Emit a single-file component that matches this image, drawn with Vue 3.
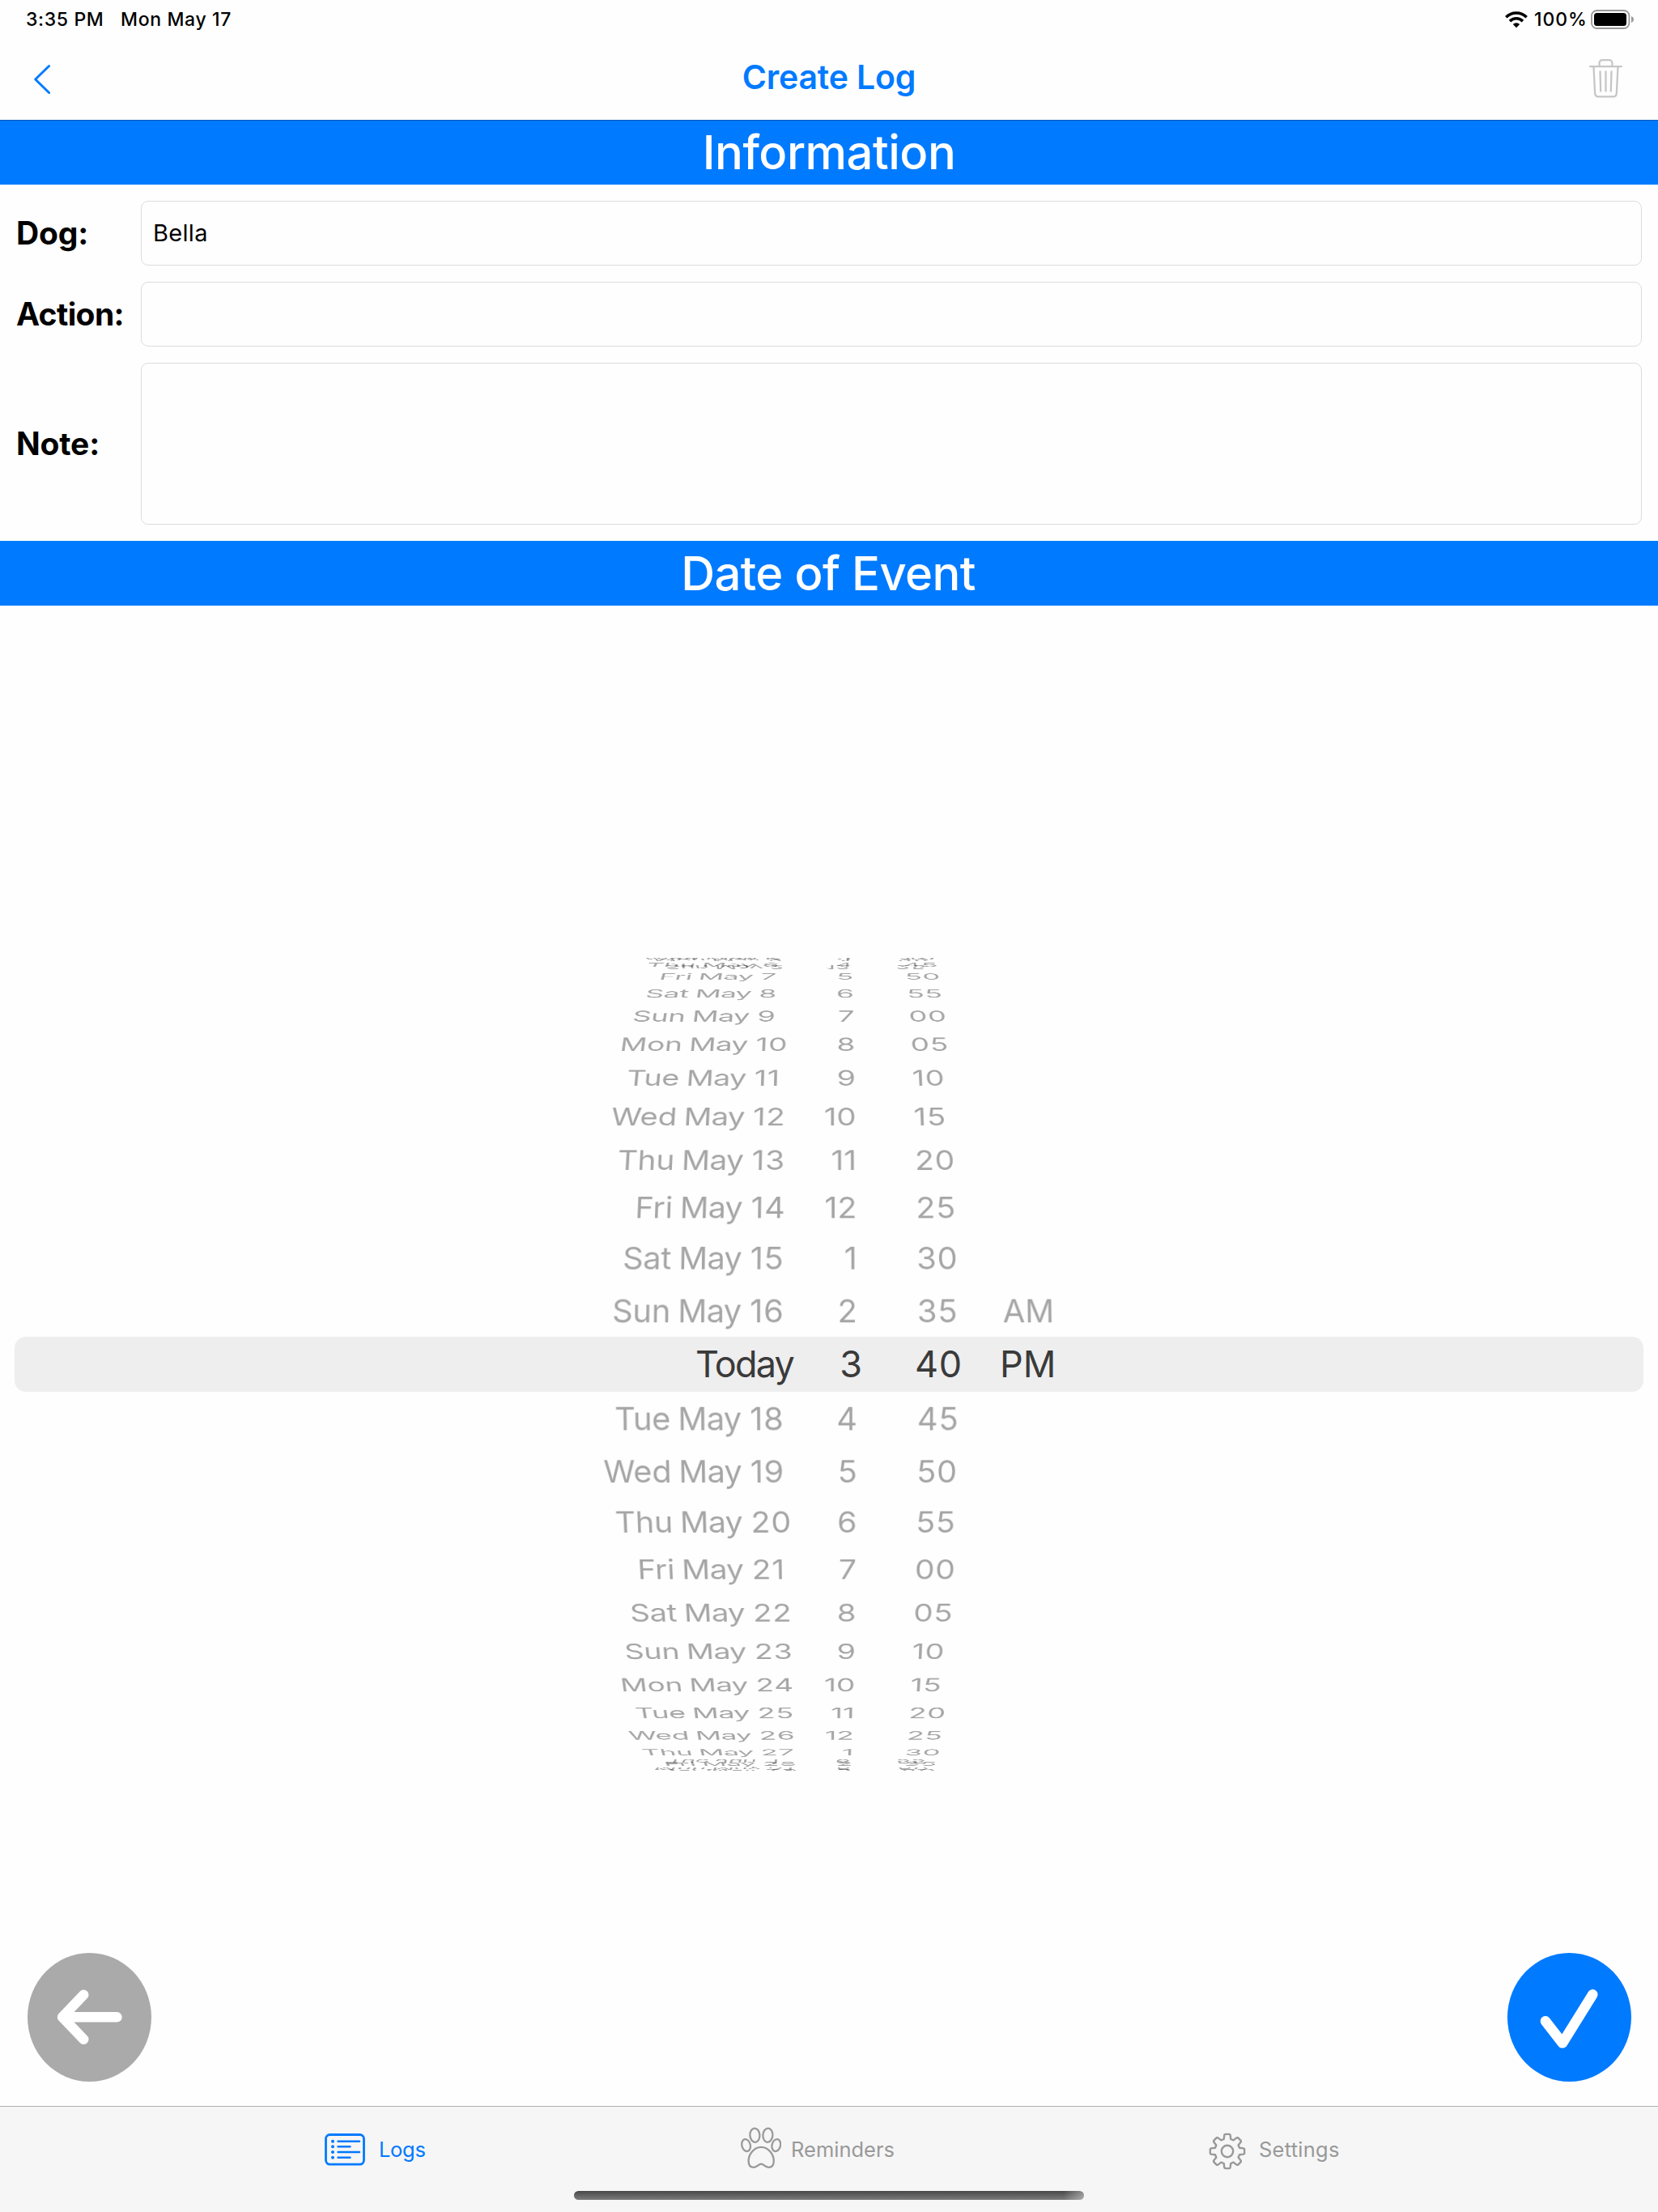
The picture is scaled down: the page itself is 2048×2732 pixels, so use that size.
<script setup>
const STEP = 5.89
const RADIUS = 650
const WEEKDAYS = ['Sun', 'Mon', 'Tue', 'Wed', 'Thu', 'Fri', 'Sat']
const MONTHS = ['Jan', 'Feb', 'Mar', 'Apr', 'May', 'Jun']

const rows = []
for (let i = -15; i <= 15; i++) {
  if (i === 0) continue
  const date = new Date(2021, 4, 17 + i)
  rows.push({
    id: i,
    weekday: WEEKDAYS[date.getDay()],
    month: MONTHS[date.getMonth()],
    day: date.getDate(),
    hour: ((i + 26) % 12) + 1,
    minute: String((((40 + 5 * i) % 60) + 60) % 60).padStart(2, '0'),
    period: i === -1 ? 'AM' : '',
    style: { transform: `rotateX(${-i * STEP}deg) translateZ(${RADIUS}px)` },
  })
}

// Outline of the eight-toothed settings gear
const gear = (() => {
  const pts = []
  for (let t = 0; t < 8; t++) {
    for (const [off, r] of [[-16, 15.6], [-10, 20.6], [-7, 21.3], [7, 21.3], [10, 20.6], [16, 15.6]]) {
      const a = ((t * 45 + off) * Math.PI) / 180
      pts.push(`${(23 + r * Math.sin(a)).toFixed(2)} ${(23 - r * Math.cos(a)).toFixed(2)}`)
    }
  }
  return `M${pts.join('L')}Z`
})()
</script>

<template>
  <main class="screen">
    <header class="top">
      <div class="status">
        <span class="time">3:35 PM</span>
        <span class="date">Mon May 17</span>
        <svg class="wifi" width="28" height="21" viewBox="0 0 28 21">
          <g fill="none" stroke="#000" stroke-width="3.6">
            <path d="M1.3 7.2a18 18 0 0 1 25.4 0" />
            <path d="M6 12.1a11.4 11.4 0 0 1 16 0" />
          </g>
          <path d="M14 20.2l-4.2-4.3a6 6 0 0 1 8.4 0z" />
        </svg>
        <span class="percent">100%</span>
        <svg class="battery" width="54" height="24" viewBox="0 0 54 24">
          <rect x="1" y="1" width="46.4" height="22" rx="6.5" fill="none" stroke="#999" stroke-width="1.8" />
          <rect x="4" y="4" width="40" height="16" rx="3.5" />
          <path d="M50 8c4 1.6 4 6.4 0 8z" fill="#999" />
        </svg>
      </div>
      <nav class="nav">
        <svg class="back" width="24" height="40" viewBox="0 0 24 40">
          <path d="M20.6 3.5L3.7 20l16.9 16.5" fill="none" stroke="#007aff" stroke-width="3" stroke-linecap="round" stroke-linejoin="round" />
        </svg>
        <h1>Create Log</h1>
        <svg class="trash" width="41" height="48" viewBox="0 0 41 48">
          <g fill="none" stroke="#c6c6c6" stroke-width="2.3" stroke-linecap="round" stroke-linejoin="round">
            <path d="M1.2 9.2h38.6M12.6 9V4.6a3.400 3.400 0 0 1 3.400-3.400h9a3.400 3.400 0 0 1 3.400 3.400V9" />
            <path d="M5.500 9.500l1.700 33.300a3.700 3.700 0 0 0 3.700 3.600h19.200a3.700 3.700 0 0 0 3.700-3.600l1.700-33.300M13.500 15.500l.7 24M20.500 15.500v24M27.500 15.500l-.7 24" />
          </g>
        </svg>
      </nav>
    </header>

    <h2 class="band first">Information</h2>

    <section class="form">
      <label class="field"><span>Dog:</span><b class="box">Bella</b></label>
      <label class="field"><span class="tight">Action:</span><b class="box"></b></label>
      <label class="field tall"><span>Note:</span><b class="box"></b></label>
    </section>

    <h2 class="band second">Date of Event</h2>

    <section class="wheel">
      <div class="selection"></div>
      <div class="drum">
        <div v-for="row in rows" :key="row.id" class="row" :style="row.style">
          <span class="weekday">{{ row.weekday }}</span>
          <span class="month">{{ row.month }}</span>
          <span class="day">{{ row.day }}</span>
          <span class="hour">{{ row.hour }}</span>
          <span class="minute">{{ row.minute }}</span>
          <span class="period">{{ row.period }}</span>
        </div>
      </div>
      <div class="current">
        <span class="today">Today</span>
        <span class="hour">3</span>
        <span class="minute">40</span>
        <span class="period">PM</span>
      </div>
    </section>

    <div class="actions">
      <svg width="153" height="159" viewBox="0 0 153 159">
        <ellipse cx="76.5" cy="79.5" rx="76.5" ry="79.5" fill="#aaa" />
        <path d="M69.3 51.8L43 79.3l26.3 27.5M43 79.3h67.500" fill="none" stroke="#fff" stroke-width="12.4" stroke-linecap="round" stroke-linejoin="round" />
      </svg>
      <svg width="153" height="159" viewBox="0 0 153 159">
        <ellipse cx="76.5" cy="79.5" rx="76.5" ry="79.5" fill="#007aff" />
        <path d="M47 84.3L68 111.3 105.3 51.3" fill="none" stroke="#fff" stroke-width="12.6" stroke-linecap="round" stroke-linejoin="round" />
      </svg>
    </div>

    <footer class="tabs">
      <div class="items">
        <a class="tab logs">
          <svg width="50" height="40" viewBox="0 0 50 40">
            <g fill="none" stroke="#007aff" stroke-linecap="round">
              <rect x="1.5" y="1.5" width="47" height="36.6" rx="5" stroke-width="2.8" />
              <path d="M16.5 9.800h26.500M16.500 16.300h15M16.500 23h26.500M16.500 29.800h15" stroke-width="2.4" />
              <path d="M10 9.800v.01M10 16.300v.01M10 23v.01M10 29.800v.01" stroke-width="4" />
            </g>
          </svg>
          <span>Logs</span>
        </a>
        <a class="tab reminders">
          <svg width="50" height="52" viewBox="0 0 50 52">
            <g fill="none" stroke="#999" stroke-width="2.3" stroke-linejoin="round">
              <ellipse cx="17.4" cy="10.2" rx="6" ry="8.6" transform="rotate(-4 17.4 10.2)" />
              <ellipse cx="33.4" cy="10.2" rx="6" ry="8.6" transform="rotate(4 33.4 10.2)" />
              <ellipse cx="6.6" cy="22.6" rx="5.2" ry="7.6" transform="rotate(-14 6.6 22.6)" />
              <ellipse cx="43.8" cy="22.6" rx="5.2" ry="7.6" transform="rotate(14 43.8 22.6)" />
              <path d="M25.2 24.8C16 24.8 9.6 34 9.6 42c0 5.5 2.6 7.800 6.400 7.800 4.600 0 6-4.200 9.200-4.200s4.600 4.200 9.200 4.200c3.800 0 6.400-2.300 6.400-7.800 0-8-6.400-17.200-15.600-17.200z" />
            </g>
          </svg>
          <span>Reminders</span>
        </a>
        <a class="tab settings">
          <svg width="46" height="46" viewBox="0 0 46 46">
            <g fill="none" stroke="#999" stroke-width="2.4" stroke-linejoin="round">
              <path :d="gear" />
              <circle cx="23" cy="23" r="7.2" />
            </g>
          </svg>
          <span>Settings</span>
        </a>
      </div>
      <div class="home"></div>
    </footer>
  </main>
</template>

<style>
body {
  margin: 0;
  background: #fefefe;
}
</style>

<style scoped>
.screen {
  width: 2048px;
  height: 2732px;
  display: flex;
  flex-direction: column;
  overflow: hidden;
  background: #fefefe;
  color: #000;
  font-family: Inter, "Liberation Sans", sans-serif;
}
h1,
h2 {
  margin: 0;
}
svg {
  display: block;
  flex: none;
}
.top {
  height: 148px;
  flex: none;
}
.status {
  height: 48px;
  padding-left: 32px;
  display: flex;
  align-items: center;
  font-size: 23px;
  font-weight: 500;
  letter-spacing: 0.65px;
  white-space: nowrap;
}
.time {
  width: 117px;
}
.date {
  flex: 1;
}
.wifi {
  margin-right: 8px;
}
.percent {
  width: 70px;
  letter-spacing: 0.9px;
}
.battery {
  margin-right: 29px;
}
.nav {
  height: 100px;
  padding: 0 44px 0 40px;
  display: grid;
  grid-template-columns: 1fr auto 1fr;
  align-items: center;
}
.nav h1 {
  font-size: 41px;
  line-height: 50px;
  font-weight: 600;
  letter-spacing: -0.15px;
  color: #007aff;
  margin: -6px -4px 0 0;
}
.trash {
  justify-self: end;
  margin-top: -3px;
}
.band {
  height: 80px;
  flex: none;
  background: #007aff;
  color: #fff;
  font-size: 58px;
  line-height: 80px;
  font-weight: 500;
  letter-spacing: -0.5px;
  text-align: center;
}
.first {
  box-shadow: inset 0 1px #0056b4;
}
.second {
  letter-spacing: -0.65px;
  text-indent: -2px;
}
.form {
  height: 400px;
  margin: 20px;
  flex: none;
  display: flex;
  flex-direction: column;
  gap: 20px;
}
.field {
  height: 80px;
  display: flex;
  align-items: center;
}
.tall {
  height: 200px;
}
.field span {
  width: 154px;
  margin-top: -2px;
  font-size: 39px;
  font-weight: 700;
  letter-spacing: -0.15px;
}
.field .tight {
  letter-spacing: -0.6px;
}
.box {
  flex: 1;
  height: 100%;
  box-sizing: border-box;
  border: 1px solid #dcdcdc;
  border-radius: 9px;
  padding-left: 14px;
  font-size: 29px;
  line-height: 78px;
  font-weight: 400;
  letter-spacing: 0.3px;
}
.wheel {
  flex: none;
  height: 1004px;
  margin-top: 435px;
  display: grid;
  align-items: center;
  overflow: hidden;
  perspective: 1944px;
  perspective-origin: 1024px 502px;
}
.wheel > * {
  grid-area: 1 / 1;
}
.selection {
  height: 68px;
  margin: 0 18px;
  border-radius: 14px;
  background: #eeeeef;
}
.drum {
  display: grid;
  transform-style: preserve-3d;
  transform: translateZ(-650px);
}
.row {
  grid-area: 1 / 1;
  height: 66px;
  line-height: 68px;
  display: grid;
  grid-template-columns: 828px 98px 59px 74px 180px 1fr;
  font-size: 40px;
  color: rgba(0, 0, 0, 0.35);
}
.weekday {
  text-align: right;
  letter-spacing: -0.2px;
}
.month {
  padding-left: 9px;
  letter-spacing: -0.7px;
}
.day {
  letter-spacing: 0.8px;
}
.hour {
  text-align: right;
}
.minute {
  padding-left: 74px;
  letter-spacing: 0.8px;
}
.current {
  display: grid;
  grid-template-columns: 980px 85px 170px 1fr;
  font-size: 45px;
  line-height: 70px;
  color: #3a3a3a;
}
.today {
  text-align: right;
  letter-spacing: -1.8px;
}
.current .minute {
  padding-left: 65px;
}
.actions {
  margin: 225px 33px 30px 34px;
  height: 159px;
  flex: none;
  display: flex;
  justify-content: space-between;
}
.tabs {
  flex: 1;
  box-sizing: border-box;
  border-top: 1px solid #adafaf;
  background: #f6f6f6;
}
.items {
  height: 104px;
  padding-left: 401px;
  display: flex;
  align-items: center;
  color: #999;
  font-size: 25.5px;
}
.tab {
  display: flex;
  align-items: center;
}
.tab span {
  line-height: 32px;
  margin-top: 2px;
}
.logs {
  width: 514px;
  color: #007aff;
  gap: 17px;
}
.logs svg {
  margin-top: 1px;
}
.logs span {
  letter-spacing: -0.3px;
}
.reminders {
  width: 578px;
  gap: 12px;
}
.reminders svg {
  margin-top: -3px;
}
.settings {
  gap: 16px;
}
.settings span {
  letter-spacing: 0.25px;
}
.settings svg {
  margin-top: 5px;
}
.home {
  width: 630px;
  height: 11px;
  margin: 0 0 0 709px;
  border-radius: 6px;
  background: linear-gradient(90deg, transparent 96%, rgba(246, 246, 246, 0.4)), linear-gradient(#484848, #7c7c7c);
}
</style>
